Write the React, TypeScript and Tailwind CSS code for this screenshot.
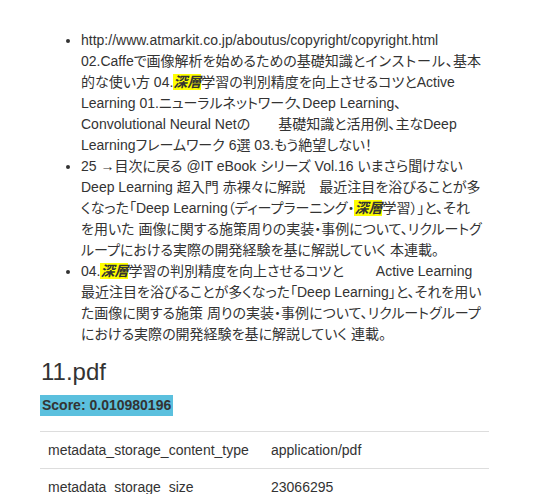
import React from "react";

const M = () => (
  <em className="bg-[#ffff00] font-bold italic">深層</em>
);

export default function App() {
  return (
    <div
      className="w-[535px] h-[494px] overflow-hidden bg-white text-[#333333] text-[14px] [font-feature-settings:'palt']"
      style={{ fontFamily: '"Liberation Sans", Arial, "Noto Sans CJK JP", sans-serif' }}
    >
      <div className="pl-[41px] w-[489px]">
        <ul className="mt-[30px] list-disc pl-[40px] leading-[21px] whitespace-pre">
          <li>
            http://www.atmarkit.co.jp/aboutus/copyright/copyright.html
            <br />
            02.Caffeで画像解析を始めるための基礎知識と<span className="tracking-[1px]">インストール</span>、基本
            <br />
            的な使い方 04.<M />学習の判別精度を向上させるコツとActive
            <br />
            Learning 01.ニューラルネットワーク、Deep Learning、
            <br />
            Convolutional Neural Netの　　基礎知識と活用例、主なDeep
            <br />
            Learningフレームワーク 6選 03.もう絶望しない！
          </li>
          <li>
            25 →目次に戻る @IT eBook シリーズ Vol.16 いまさら聞けない
            <br />
            Deep Learning 超入門 赤裸々に解説　最近注目を浴びることが多
            <br />
            くなった「Deep Learning（ディープラーニング・<M />学習）」と、それ
            <br />
            を用いた 画像に関する施策周りの実装・事例について、リクルートグ
            <br />
            ループにおける実際の開発経験を基に解説していく 本連載。
          </li>
          <li>
            04.<M />学習の判別精度を向上させるコツと　　 Active Learning
            <br />
            最近注目を浴びることが多くなった「Deep Learning」と、それを用い
            <br />
            た画像に関する施策 周りの実装・事例について、リクルートグループ
            <br />
            における実際の開発経験を基に解説していく 連載。
          </li>
        </ul>
        <h3 className="mt-[14px] text-[24px] leading-[26px] font-normal">11.pdf</h3>
        <div className="mt-[10px] -ml-px">
          <span className="inline-block bg-[#5bc0de] px-[2px] font-bold leading-[21px] text-[14px]">
            Score: 0.010980196
          </span>
        </div>
        <table className="mt-[15px] -ml-px w-[449px] border-collapse">
          <tbody>
            <tr className="border-t border-[#dddddd]">
              <td className="w-[223px] px-[8px] py-[8px] leading-[20px]">metadata_storage_content_type</td>
              <td className="px-[8px] py-[8px] leading-[20px]">application/pdf</td>
            </tr>
            <tr className="border-t border-[#dddddd]">
              <td className="px-[8px] py-[8px] leading-[20px]">metadata_storage_size</td>
              <td className="px-[8px] py-[8px] leading-[20px]">23066295</td>
            </tr>
          </tbody>
        </table>
      </div>
    </div>
  );
}
